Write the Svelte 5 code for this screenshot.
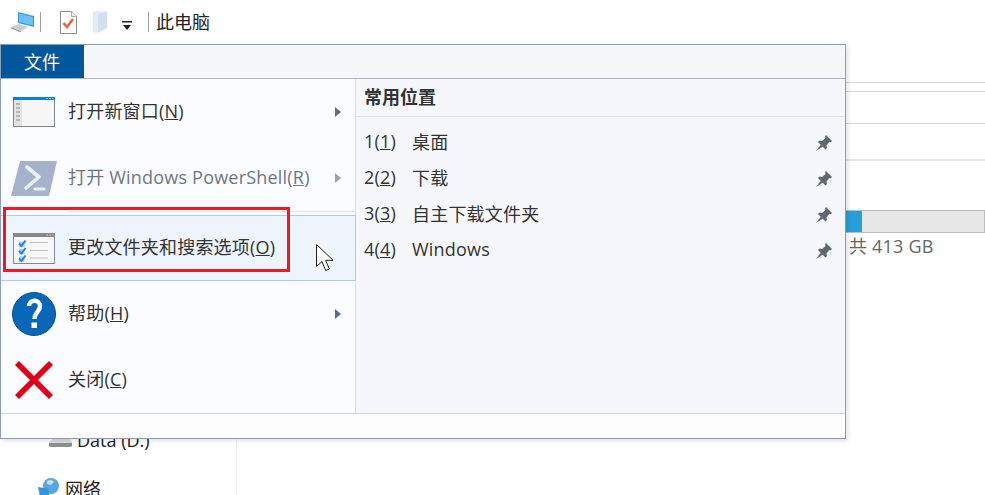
<script>
	const places = [
		{ n: '1', label: '桌面' },
		{ n: '2', label: '下载' },
		{ n: '3', label: '自主下载文件夹' },
		{ n: '4', label: 'Windows' }
	];
</script>

{#snippet winFrame(barColor)}
	<rect x="0.5" y="0.5" width="41" height="29" fill="#f7f7f7" stroke="#7f8690" />
	<rect x="0" y="0" width="42" height="3" fill={barColor} />
{/snippet}

{#snippet arrow()}
	<svg class="arrow" width="6" height="10" viewBox="0 0 6 10"><path d="M0 0l6 5-6 5z" /></svg>
{/snippet}

<div class="explorer">
	<header class="titlebar">
		<svg class="qa-pc" width="24" height="22" viewBox="0 0 24 22">
			<path d="M7 1l16 4v11L7 12z" fill="#2f9be4" />
			<path d="M8 2.500l14 3.500v8.500L8 11z" fill="#6cc0f2" />
			<path d="M0 16l8-3 9 3-7 4z" fill="#c9ced3" />
			<path d="M0 16l10 4v1.500L0 17.500z" fill="#9aa0a6" />
		</svg>
		<span class="qa-sep"></span>
		<svg class="qa-doc" width="17" height="23" viewBox="0 0 17 23">
			<path d="M.5.500h11l5 5v17H.5z" fill="#fff" stroke="#8b8b8b" />
			<path d="M11.500.500v5h5" fill="#eee" stroke="#aaa" />
			<path d="M3.500 12l3.500 4 6-8" fill="none" stroke="#e8622a" stroke-width="2.400" />
		</svg>
		<svg class="qa-folder" width="15" height="22" viewBox="0 0 15 22">
			<path d="M0 0h14v17l-9 4.500H0z" fill="#e3ebf6" />
			<path d="M5 4l9-4v17l-9 4.500z" fill="#d2dff0" />
		</svg>
		<svg class="qa-drop" width="10" height="9" viewBox="0 0 10 9">
			<path d="M0 0h10v1.500H0z" fill="#222" />
			<path d="M1 4h8L5 9z" fill="#222" />
		</svg>
		<span class="qa-sep last"></span>
		<span class="title">此电脑</span>
	</header>

	<div class="behind">
		<aside class="tree">
			<div class="drive">
				<svg width="23" height="13" viewBox="0 0 23 13">
					<path d="M0 8l6-5h13l4 5v5H0z" fill="#dcdcdc" />
					<path d="M0 9h23v3l-2 1H2l-2-1z" fill="#8f8f8f" />
					<path d="M17 10.500h3" stroke="#5fbf6a" />
				</svg>
				<span>Data (D.)</span>
			</div>
			<div class="net">
				<svg width="22" height="21" viewBox="0 0 22 21">
					<circle cx="13" cy="8" r="8" fill="#58a6dc" />
					<path d="M9 3c3-2 6-1 7 1l-3 3-4-1z" fill="#bfe0f5" />
					<path d="M0 9l11 2v10L2 18z" fill="#2f93de" />
				</svg>
				<span>网络</span>
			</div>
		</aside>
		<main class="pane">
			<div class="rule r1"></div>
			<div class="rule r2"></div>
			<div class="rule r3"></div>
			<div class="rule r4"></div>
			<div class="bar"><div class="fill"></div></div>
			<div class="size">共 413 GB</div>
		</main>
	</div>

	<section class="menu">
		<div class="tabs">
			<div class="tab">文件</div>
		</div>
		<div class="body">
			<div class="left">
				<div class="item">
					<svg class="ico" width="42" height="30" viewBox="0 0 42 30">
						{@render winFrame('#0a7fd9')}
						<rect x="1" y="3" width="8" height="26" fill="#e3e3e3" />
						<path d="M3 7h4M3 11h4M3 15h4M3 19h4M3 23h4" stroke="#8a8a8a" stroke-width="1.200" />
						<path d="M33 1.500h2M36 1.500h2M39 1.500h1.500" stroke="#9fd0f5" />
					</svg>
					<span class="text">打开新窗口(<u>N</u>)</span>
					{@render arrow()}
				</div>
				<div class="item disabled">
					<svg class="ico ps" width="46" height="35" viewBox="0 0 46 35">
						<path d="M9 0h37l-8 35H0z" fill="#a4b3cb" />
						<path d="M16 6l12 10-13 11" fill="none" stroke="#eaf0f8" stroke-width="3.600" stroke-linecap="round" stroke-linejoin="round" />
						<path d="M24 28h9" stroke="#eaf0f8" stroke-width="3.200" stroke-linecap="round" />
					</svg>
					<span class="text">打开 Windows PowerShell(<u>R</u>)</span>
					{@render arrow()}
				</div>
				<div class="divider"></div>
				<div class="item hover">
					<svg class="ico" width="42" height="31" viewBox="0 0 42 31">
						<rect x=".5" y=".5" width="41" height="30" fill="#f7f7f7" stroke="#85898e" />
						<rect x="0" y="0" width="42" height="4" fill="#85898e" />
						<path d="M33 2h2M36 2h2M39 2h1.500" stroke="#c8c8c8" />
						<path d="M6 8.500h5.500V14H6zM6 16h5.500v5.500H6zM6 23.500h5.500V29H6z" fill="#a9d2f3" />
						<path d="M6 10.500l2.500 2.500 4-5.500M6 18l2.500 2.500 4-5.500M6 25.500l2.500 2.500 4-5.500" fill="none" stroke="#1e86dc" stroke-width="2" />
						<path d="M17 9.500h18M17 17.500h18M17 25h18" stroke="#bdbdbd" stroke-width="1.200" />
					</svg>
					<span class="text">更改文件夹和搜索选项(<u>O</u>)</span>
				</div>
				<div class="item">
					<svg class="ico help" width="44" height="44" viewBox="0 0 44 44">
						<circle cx="22" cy="22" r="21.500" fill="#0867b8" stroke="#0d4f86" />
						<path d="M17 14c0-7 11-7 11 0 0 6-5.500 6-5.500 13" fill="none" stroke="#fff" stroke-width="4.400" />
						<rect x="19.500" y="30.500" width="5.500" height="5.500" fill="#fff" />
					</svg>
					<span class="text">帮助(<u>H</u>)</span>
					{@render arrow()}
				</div>
				<div class="item">
					<svg class="ico cross" width="38" height="38" viewBox="0 0 38 38">
						<path d="M4 0l15 15L34 0l4 4-15 15 15 15-4 4-15-15L4 38l-4-4 15-15L0 4z" fill="#e00018" />
					</svg>
					<span class="text">关闭(<u>C</u>)</span>
				</div>
			</div>
			<div class="right">
				<h2 class="head">常用位置</h2>
				<ul class="places">
					{#each places as p}
						<li>
							<span class="num">{p.n}(<u>{p.n}</u>)</span>
							<span class="label">{p.label}</span>
							<svg class="pin" width="16" height="16" viewBox="0 0 16 16">
								<path d="M10 0l6 6-1.500 1.500-1.200-.5L10.500 10.500l.5 2.500-1.500 1.500L2 7l1.500-1.500 2.700.5L9.500 3 9 1.500z" fill="#5f6870" />
								<path d="M5 9.500L0 16l7-4.500z" fill="#5f6870" />
							</svg>
						</li>
					{/each}
				</ul>
			</div>
		</div>
		<div class="foot"></div>
	</section>

	<div class="callout"></div>
	<svg class="cursor" width="20" height="29" viewBox="0 0 20 29">
		<path d="M.5.500v22l5.500-5 3.700 9 3.600-1.500-3.700-8.700h7.500z" fill="#fff" stroke="#222" stroke-width="1" />
	</svg>
</div>

<style>
	:global(body) {
		background: #fff;
	}
	.explorer {
		position: relative;
		width: 985px;
		height: 495px;
		overflow: hidden;
		background: #fff;
		color: #333;
		font-family: 'Open Sans', 'Noto Sans CJK SC', sans-serif;
		font-size: 18px;
	}
	.titlebar {
		display: flex;
		align-items: center;
		height: 44px;
		padding-left: 11px;
		box-sizing: border-box;
	}
	.qa-pc {
		margin-right: 5px;
	}
	.qa-sep {
		width: 1px;
		height: 20px;
		background: #a0a0a0;
		margin-right: 19px;
	}
	.qa-sep.last {
		margin: 0 7px 0 16px;
	}
	.qa-doc {
		margin-right: 16px;
	}
	.qa-folder {
		margin-right: 14px;
	}
	.qa-drop {
		margin-top: 6px;
	}
	.title {
		color: #222;
		line-height: 44px;
	}
	.behind {
		display: flex;
		height: 451px;
	}
	.tree {
		width: 237px;
		box-sizing: border-box;
		border-right: 1px solid #eee;
		padding: 384px 0 0 38px;
		color: #222;
	}
	.drive {
		display: flex;
		align-items: center;
		gap: 5px;
		margin-left: 11px;
		height: 24px;
	}
	.net {
		display: flex;
		align-items: center;
		gap: 5px;
		margin-top: 25px;
		height: 22px;
	}
	.pane {
		flex: 1;
		display: flex;
		flex-direction: column;
	}
	.rule {
		border-bottom: 1px solid #d9d9d9;
	}
	.r1 {
		height: 38px;
	}
	.r2 {
		height: 8px;
	}
	.r3 {
		height: 31px;
	}
	.r4 {
		height: 35px;
		border-bottom: 2px solid #e6e6e6;
	}
	.bar {
		margin-top: 49px;
		height: 23px;
		box-sizing: border-box;
		border: 1px solid #bcbcbc;
		background: #e6e6e6;
	}
	.fill {
		width: 624px;
		height: 100%;
		background: #26a0da;
	}
	.size {
		padding-left: 612px;
		color: #666;
		line-height: 26px;
		white-space: nowrap;
		letter-spacing: 0.2px;
	}
	.menu {
		position: absolute;
		left: 0;
		top: 44px;
		width: 846px;
		height: 395px;
		box-sizing: border-box;
		display: flex;
		flex-direction: column;
		background: #fdfdfd;
		border: 1px solid #8d9db5;
		box-shadow: 2px 2px 5px rgba(0, 0, 0, 0.12);
	}
	.tabs {
		height: 34px;
		box-sizing: border-box;
		background: #f5f6f8;
		border-bottom: 1px solid #a9b5c6;
		flex: none;
	}
	.tab {
		width: 83px;
		height: 33px;
		background: #01579b;
		color: #fff;
		display: flex;
		align-items: center;
		justify-content: center;
		line-height: 1;
		padding-right: 1px;
		box-sizing: border-box;
	}
	.body {
		display: flex;
		height: 334px;
		flex: none;
		border-bottom: 1px solid #cfd7e3;
	}
	.left {
		width: 354px;
		flex: none;
		display: flex;
		flex-direction: column;
		background: #fbfcff;
		border-right: 1px solid #d9dfe8;
	}
	.item {
		position: relative;
		display: flex;
		align-items: center;
		height: 66px;
		flex: none;
		box-sizing: border-box;
		padding: 0 14px 0 12px;
	}
	.ico {
		flex: none;
		margin-right: 13px;
	}
	.ico.ps {
		margin-left: -2px;
		margin-right: 11px;
	}
	.ico.help {
		margin-left: -1px;
		margin-right: 12px;
	}
	.ico.cross {
		margin-left: 2px;
		margin-right: 15px;
	}
	.text {
		flex: 1;
		white-space: nowrap;
		line-height: 24px;
		margin-bottom: 2px;
		letter-spacing: 0.2px;
	}
	.disabled {
		color: #6f7780;
	}
	.hover {
		background: #edf4fc;
		border: 1px solid #a9cdf1;
		border-left: 0;
		width: 355px;
	}
	.divider {
		height: 4px;
		box-sizing: border-box;
		margin-left: 66px;
		border-top: 1px solid #dfe3e8;
	}
	.arrow {
		flex: none;
		fill: #5d6d85;
	}
	.disabled .arrow {
		fill: #9aa3b0;
	}
	.right {
		flex: 1;
		background: #f5f7fa;
		padding-left: 1px;
	}
	.head {
		margin: 0;
		height: 38px;
		box-sizing: border-box;
		padding: 6px 0 0 7px;
		font-size: 18px;
		line-height: 24px;
		font-weight: 700;
		color: #333;
		border-bottom: 1px solid #dcdfe4;
	}
	.places {
		list-style: none;
		margin: 0;
		padding: 6px 0 0 7px;
		letter-spacing: 0.2px;
	}
	.places li {
		display: flex;
		align-items: center;
		height: 36px;
		padding-right: 13px;
	}
	.num {
		width: 48px;
		flex: none;
	}
	.label {
		flex: 1;
	}
	.pin {
		margin-top: 4px;
	}
	.callout {
		position: absolute;
		left: 3px;
		top: 207px;
		width: 287px;
		height: 65px;
		box-sizing: border-box;
		border: 3px solid #e81c24;
	}
	.cursor {
		position: absolute;
		left: 316px;
		top: 244px;
	}
</style>
